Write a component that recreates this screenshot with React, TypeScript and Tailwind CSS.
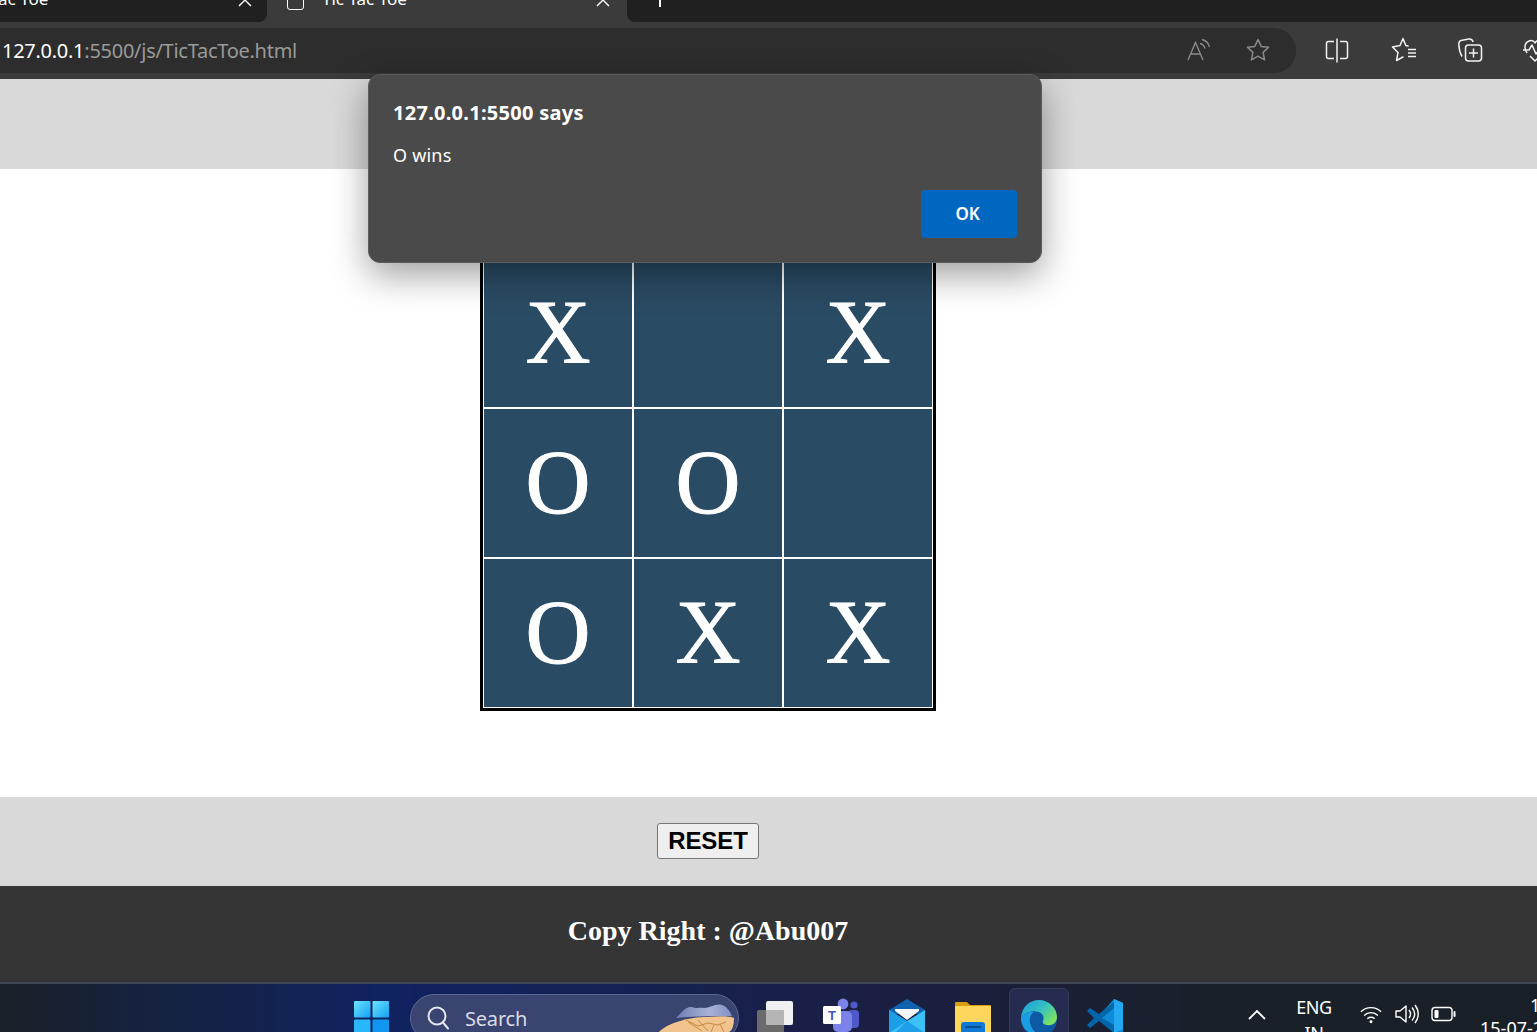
import React from 'react';

const cells = ['X', '', 'X', 'O', 'O', '', 'O', 'X', 'X'];

const TabClose: React.FC = () => (
  <svg width="14" height="14" viewBox="0 0 14 14" className="text-white" fill="none" stroke="currentColor" strokeWidth="1.4">
    <path d="M1 1l12 12M13 1L1 13" />
  </svg>
);

const ReadAloudIcon: React.FC = () => (
  <svg width="26" height="26" viewBox="0 0 26 26" fill="none" stroke="#8a8a8a" strokeWidth="1.4">
    <path d="M2 23L9.5 5.5 17 23M4.8 17h9.6" />
    <path d="M14 6.5c2.6.6 4.4 2.4 5 5M16 2.5c3.8.9 6.6 3.8 7.4 7.5" />
  </svg>
);

const StarIcon: React.FC = () => (
  <svg width="26" height="26" viewBox="0 0 26 26" fill="none" stroke="#8a8a8a" strokeWidth="1.5" strokeLinejoin="round">
    <path d="M13 2.5l3.2 6.9 7.4.9-5.5 5.1 1.5 7.4-6.6-3.7-6.6 3.7 1.5-7.4-5.5-5.1 7.4-.9z" />
  </svg>
);

const SplitIcon: React.FC = () => (
  <svg width="26" height="26" viewBox="0 0 26 26" fill="none" stroke="#f2f2f2" strokeWidth="1.5">
    <path d="M10 4.5H4.5a2 2 0 0 0-2 2v13a2 2 0 0 0 2 2H10M16 4.5h5.5a2 2 0 0 1 2 2v13a2 2 0 0 1-2 2H16M13 1.5v24" />
  </svg>
);

const FavoritesIcon: React.FC = () => (
  <svg width="28" height="26" viewBox="0 0 28 26" fill="none" stroke="#f2f2f2" strokeWidth="1.5" strokeLinejoin="round" strokeLinecap="round">
    <path d="M17 9l-2.200-.5L12 1.500 9 8.500 1.500 10 7 15.500 5.500 23.500l6.500-3.500" />
    <path d="M17 12.500h8M17 16h8M17 19.500h8" strokeLinecap="butt" />
  </svg>
);

const CollectionsIcon: React.FC = () => (
  <svg width="26" height="26" viewBox="0 0 26 26" fill="none" stroke="#f2f2f2" strokeWidth="1.5">
    <rect x="8.500" y="8" width="16" height="16" rx="3" />
    <path d="M16.500 11.500v9M12 16h9" />
    <path d="M5 19.500C3.500 17 2 12 1.800 7.500 1.700 5 3 3.500 5 3.200L12 2c2-.3 3.500.6 4.200 3" />
  </svg>
);

const PerformanceIcon: React.FC = () => (
  <svg width="26" height="26" viewBox="0 0 26 26" fill="none" stroke="#f2f2f2" strokeWidth="1.5" strokeLinejoin="round">
    <path d="M5 16C2 12 2 6 7 4c3-1 5 0 6 2 1-2 3-3 6-2 5 2 5 8 2 12l-8 8-5-5" />
    <path d="M1 13h6l3-5 4 9 3-4h7" />
  </svg>
);

const WindowsLogo: React.FC = () => (
  <svg width="35" height="35" viewBox="0 0 35 35" className="shrink-0">
    <defs>
      <linearGradient id="winTile" x1="0" y1="0" x2="1" y2="1">
        <stop offset="0" stopColor="#6ee3ff" />
        <stop offset="1" stopColor="#12a0f5" />
      </linearGradient>
    </defs>
    <rect x="0" y="0" width="16.500" height="16.500" rx="1" fill="url(#winTile)" />
    <rect x="18.500" y="0" width="16.500" height="16.500" rx="1" fill="url(#winTile)" />
    <rect x="0" y="18.500" width="16.500" height="16.500" rx="1" fill="#29b6fa" />
    <rect x="18.500" y="18.500" width="16.500" height="16.500" rx="1" fill="#1095f0" />
  </svg>
);

const SearchDoodle: React.FC = () => (
  <svg width="78" height="29" viewBox="0 0 78 29" className="shrink-0">
    <defs>
      <linearGradient id="rocks" x1="0" y1="0" x2="1" y2="0">
        <stop offset="0" stopColor="#6f7cb4" />
        <stop offset="0.6" stopColor="#a9b2d6" />
        <stop offset="1" stopColor="#7f8ec4" />
      </linearGradient>
    </defs>
    <path d="M18 15C24 9 28 3 34 4c4 2 8 0 12 1 6 0 12-5 18-3 4 1 8 6 10 11-14 0-34 0-56 2z" fill="url(#rocks)" />
    <path d="M1 29C10 20 30 14 50 14c10-1 22-1 26 1 0 7-2 14-6 14z" fill="#f2c48d" />
    <path d="M26 16l14 7 10-3 10 2 8-3M30 19l14 9M40 17l10 11M56 22l-3 7M62 21l4 8" fill="none" stroke="#c58a45" strokeWidth="1" />
  </svg>
);

const TaskViewIcon: React.FC = () => (
  <svg width="36" height="34" viewBox="0 0 36 34" className="shrink-0">
    <rect x="0" y="9" width="27" height="25" rx="2" fill="#6b6b6b" />
    <rect x="9" y="0" width="27" height="24" rx="2" fill="#f0f0f0" />
    <rect x="9" y="9" width="18" height="15" rx="1" fill="#b5b5b5" />
  </svg>
);

const TeamsIcon: React.FC = () => (
  <svg width="36" height="34" viewBox="0 0 36 34" className="shrink-0">
    <circle cx="31" cy="7" r="3.600" fill="#5059c9" />
    <rect x="25" y="12" width="11" height="18" rx="4" fill="#5059c9" />
    <circle cx="20" cy="6" r="5.400" fill="#7b83eb" />
    <rect x="10" y="13" width="19" height="21" rx="5" fill="#7b83eb" />
    <rect x="0" y="8" width="18" height="18" rx="1.500" fill="#fff" />
    <text x="9" y="22" textAnchor="middle" fontFamily="'Liberation Sans', sans-serif" fontWeight="700" fontSize="13" fill="#4b53bc">T</text>
  </svg>
);

const MailIcon: React.FC = () => (
  <svg width="36" height="34" viewBox="0 0 36 34" className="shrink-0">
    <path d="M0 11L18 0l18 11v4H0z" fill="#0f62ae" />
    <path d="M6 10h24v2L18 21 6 12z" fill="#f5f5f5" />
    <path d="M0 11l18 11 18-11v23H0z" fill="#3cc0f7" />
    <path d="M0 11l18 11-18 12z" fill="#1a9ee6" />
    <path d="M18 22l18 12H6z" fill="#1f9fe8" />
  </svg>
);

const FolderIcon: React.FC = () => (
  <svg width="36" height="34" viewBox="0 0 36 34" className="shrink-0">
    <path d="M0 2a1 1 0 0 1 1-1h11l3 3h20a1 1 0 0 1 1 1v29H0z" fill="#d99e0c" />
    <rect x="0" y="5" width="36" height="29" rx="1" fill="#ffd65c" />
    <rect x="6" y="21" width="24" height="13" rx="3" fill="#0f78d4" />
    <rect x="10" y="25" width="16" height="2" fill="#064f8f" />
  </svg>
);

const EdgeIcon: React.FC = () => (
  <svg width="36" height="34" viewBox="0 0 36 34" className="shrink-0">
    <defs>
      <linearGradient id="edgeTop" x1="0" y1="0" x2="1" y2="0.7">
        <stop offset="0" stopColor="#1b9de2" />
        <stop offset="0.55" stopColor="#35c1c0" />
        <stop offset="1" stopColor="#7ee35f" />
      </linearGradient>
    </defs>
    <circle cx="18" cy="19" r="18" fill="#0c59a4" />
    <path d="M0 18C1 6 9 0 18 0c10 0 18 8 18 17 0 6-5 9-10 8-3 0-5-2-4-4 1-3 1-7-4-9C12 10 3 12 0 18z" fill="url(#edgeTop)" />
    <path d="M0 18c3-5 8-7 13-6-3 2-5 6-4 11 1 4 3 8 8 11H12C5 32 0 26 0 18z" fill="#1b9de2" />
  </svg>
);

const VsCodeIcon: React.FC = () => (
  <svg width="36" height="34" viewBox="0 0 36 34" className="shrink-0">
    <path d="M27 0l9 4v30h-9L11 18z" fill="#0f8ad6" />
    <path d="M27 0v34L36 30V4z" fill="#23a9f2" />
    <path d="M3 9L0 12l7 7-7 7 3 3 9-7 15 12v-8L15 19 27 9V3L12 15z" fill="#0065a9" />
  </svg>
);

const WifiIcon: React.FC = () => (
  <svg width="22" height="19" viewBox="0 0 24 20" fill="none" stroke="#fff" strokeWidth="1.500">
    <path d="M1 7c6-6 16-6 22 0M4.500 11c4-4 11-4 15 0M8 14.500c2.200-2 5.800-2 8 0" />
    <circle cx="12" cy="18" r="1.600" fill="#fff" stroke="none" />
  </svg>
);

const SpeakerIcon: React.FC = () => (
  <svg width="24" height="22" viewBox="0 0 24 22" fill="none" stroke="#fff" strokeWidth="1.400" strokeLinejoin="round">
    <path d="M1 8h4l6-5v16l-6-5H1z" />
    <path d="M14 7c2 2.500 2 5.500 0 8M17 4.500c3.300 4 3.300 9 0 13M20 2c4.300 5.500 4.300 12.500 0 18" />
  </svg>
);

const BatteryIcon: React.FC = () => (
  <svg width="25" height="16" viewBox="0 0 25 16" fill="none" stroke="#fff" strokeWidth="1.400">
    <rect x="1" y="1.500" width="20" height="13" rx="3" />
    <rect x="3.500" y="4" width="4" height="8" rx="1" fill="#fff" stroke="none" />
    <path d="M23.500 6v4" strokeWidth="2" strokeLinecap="round" />
  </svg>
);

const AlertDialog: React.FC = () => (
  <div className="absolute left-[368px] top-[74px] w-[674px] h-[189px] rounded-[12px] border border-[#5c5c5c] bg-[#4a4a4a] px-6 pt-[24px] text-white shadow-[0_12px_36px_rgba(0,0,0,0.38)] font-['Noto_Sans',sans-serif]">
    <div className="text-[20px] leading-[28px] font-bold tracking-[0.27px]">127.0.0.1:5500 says</div>
    <div className="mt-[15px] text-[18px] leading-[26px] tracking-[0.2px]">O wins</div>
    <div className="flex justify-end mt-[22px]">
      <button className="w-[96px] h-[48px] rounded-[4px] bg-[#0067c0] text-[17px] font-semibold text-white tracking-[-0.3px] pr-[3px]">OK</button>
    </div>
  </div>
);

const App: React.FC = () => {
  return (
    <div className="relative h-[1032px] w-[1537px] overflow-hidden bg-white flex flex-col">
      {/* browser chrome, cropped at the top */}
      <div className="h-[22px] bg-[#3b3b3b] flex shrink-0 overflow-hidden font-['Noto_Sans',sans-serif]">
        <div className="w-[267px] bg-[#202020] rounded-br-[8px] flex items-start justify-between pr-[15px] shrink-0">
          <span className="-mt-[14px] -ml-[2px] text-[17px] text-white">ac Toe</span>
          <span className="-mt-[7px]"><TabClose /></span>
        </div>
        <div className="w-[360px] flex items-start pl-[20px] pr-[17px] shrink-0">
          <div className="-mt-[8px] w-[17px] h-[18px] border-[1.5px] border-white rounded-[3px] shrink-0"></div>
          <span className="-mt-[14px] ml-[18px] text-[17px] text-white">Tic Tac Toe</span>
          <span className="-mt-[7px] ml-auto"><TabClose /></span>
        </div>
        <div className="flex-1 bg-[#202020] rounded-bl-[8px] pl-[32px]">
          <div className="w-[1.5px] h-[7px] bg-white"></div>
        </div>
      </div>
      <div className="h-[57px] bg-[#3b3b3b] flex items-center shrink-0 pb-[1px] font-['Noto_Sans',sans-serif]">
        <div className="w-[1296px] h-[45px] rounded-r-[22px] bg-[#2d2d2d] flex items-center pl-[2px] pr-[25px] shrink-0">
          <span className="text-[20px] tracking-[-0.27px] text-white pt-[2px]">127.0.0.1<span className="text-[#9a9a9a]">:5500/js/TicTacToe.html</span></span>
          <div className="ml-auto flex items-center gap-[33px]">
            <ReadAloudIcon />
            <StarIcon />
          </div>
        </div>
        <div className="flex items-center ml-[28px] shrink-0">
          <SplitIcon />
          <div className="ml-[41px]"><FavoritesIcon /></div>
          <div className="ml-[38px]"><CollectionsIcon /></div>
          <div className="ml-[39px]"><PerformanceIcon /></div>
        </div>
      </div>

      {/* page */}
      <header className="h-[90px] bg-[#d9d9d9] shrink-0"></header>
      <main className="h-[628px] shrink-0 bg-white pr-[121px] pt-[86px]">
        <div className="w-[456px] h-[456px] mx-auto border-[3px] border-black grid grid-cols-3 grid-rows-3 bg-[#2a4b64]">
          {cells.map((value, i) => (
            <div key={i} className="border border-white flex items-center justify-center text-white text-[90px] leading-none font-['Liberation_Serif',serif] [-webkit-text-stroke:1px_white]">
              {value}
            </div>
          ))}
        </div>
      </main>
      <section className="h-[89px] bg-[#d9d9d9] shrink-0 flex items-center justify-center pr-[121px] pb-[1px]">
        <button className="w-[102px] h-[36px] rounded-[3px] border border-[#767676] bg-[#efefef] text-black text-[24px] font-bold leading-none tracking-[-0.1px] font-['Liberation_Sans',sans-serif]">RESET</button>
      </section>
      <footer className="h-[96px] bg-[#353535] shrink-0 flex items-center justify-center pr-[121px]">
        <p className="text-white text-[28px] font-bold font-['Liberation_Serif',serif] -mt-[6px]">Copy Right : @Abu007</p>
      </footer>

      {/* windows taskbar, cropped at the bottom */}
      <div className="h-[50px] shrink-0 border-t-2 border-[#3f4656] bg-[linear-gradient(90deg,#1a2129_0%,#0f2260_25%,#1a1f45_55%,#1a2028_80%,#1a2028_100%)] flex items-start overflow-hidden font-['Noto_Sans',sans-serif]">
        <div className="ml-[354px] mt-[17px]"><WindowsLogo /></div>
        <div className="ml-[21px] mt-[10px] w-[329px] h-[48px] rounded-[24px] border border-[#5d6690] bg-[#3a4470] flex items-start pl-[15px] pr-[2px] overflow-hidden shrink-0">
          <svg width="24" height="26" viewBox="0 0 24 26" fill="none" stroke="#e4e6ef" strokeWidth="2" className="mt-[10px] shrink-0">
            <circle cx="11" cy="11" r="8.500" />
            <path d="M17 17.500l5 6" strokeLinecap="round" />
          </svg>
          <span className="ml-[15px] mt-[9px] text-[20px] text-[#d9dbe6] tracking-[-0.2px]">Search</span>
          <div className="ml-auto mt-[8px]"><SearchDoodle /></div>
        </div>
        <div className="ml-[18px] mt-[17px]"><TaskViewIcon /></div>
        <div className="ml-[30px] mt-[14px]"><TeamsIcon /></div>
        <div className="ml-[30px] mt-[15px]"><MailIcon /></div>
        <div className="ml-[30px] mt-[17px]"><FolderIcon /></div>
        <div className="ml-[18px] mt-[4px] w-[60px] h-[50px] rounded-[6px] border border-[#333a5c] bg-[#252c4f] flex justify-center pt-[11px] shrink-0"><EdgeIcon /></div>
        <div className="ml-[18px] mt-[15px]"><VsCodeIcon /></div>
        <div className="ml-[125px] mt-[25px] shrink-0">
          <svg width="18" height="11" viewBox="0 0 18 11" fill="none" stroke="#fff" strokeWidth="1.800"><path d="M1 10l8-8 8 8" /></svg>
        </div>
        <div className="ml-[26px] mt-[10px] w-[44px] text-center text-[18px] leading-[26px] text-white tracking-[-0.5px] shrink-0">ENG<br />IN</div>
        <div className="ml-[24px] mt-[21px] shrink-0"><WifiIcon /></div>
        <div className="ml-[13px] mt-[19px] shrink-0"><SpeakerIcon /></div>
        <div className="ml-[12px] mt-[22px] shrink-0"><BatteryIcon /></div>
        <div className="ml-[24px] mt-[10px] w-[80px] text-[18px] leading-[23px] text-white shrink-0 whitespace-nowrap">
          <div className="pl-[50px]">1</div>
          <div>15-07-2023</div>
        </div>
      </div>

      <AlertDialog />
    </div>
  );
};

export default App;
